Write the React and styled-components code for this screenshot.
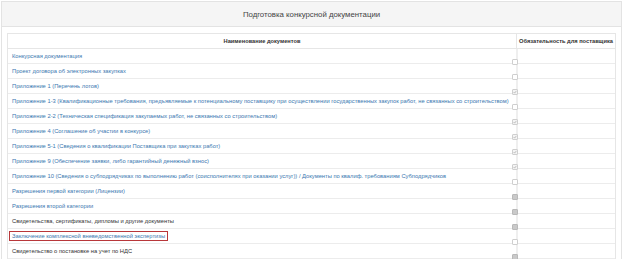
import styled, { createGlobalStyle } from "styled-components";

const GlobalStyle = createGlobalStyle`
  body {
    margin: 0;
    background: #fff;
    font-family: "Liberation Sans", Arial, sans-serif;
    color: #333;
  }
`;

// список документов конкурса
const DOCS = [
  { title: "Конкурсная документация", link: true, box: "empty" },
  { title: "Проект договора об электронных закупках", link: true, box: "empty" },
  { title: "Приложение 1 (Перечень лотов)", link: true, box: "checked" },
  {
    title:
      "Приложение 1-3 (Квалификационные требования, предъявляемые к потенциальному поставщику при осуществлении государственных закупок работ, не связанных со строительством)",
    link: true,
    box: "empty",
  },
  {
    title: "Приложение 2-2 (Техническая спецификация закупаемых работ, не связанных со строительством)",
    link: true,
    box: "checked",
  },
  { title: "Приложение 4 (Соглашение об участии в конкурсе)", link: true, box: "checked" },
  {
    title: "Приложение 5-1 (Сведения о квалификации Поставщика при закупках работ)",
    link: true,
    box: "checked",
  },
  {
    title: "Приложение 9 (Обеспечение заявки, либо гарантийный денежный взнос)",
    link: true,
    box: "checked",
  },
  {
    title:
      "Приложение 10 (Сведения о субподрядчиках по выполнению работ (соисполнителях при оказании услуг)) / Документы по квалиф. требованиям Субподрядчиков",
    link: true,
    box: "empty",
  },
  { title: "Разрешения первой категории (Лицензии)", link: true, box: "filled" },
  { title: "Разрешения второй категории", link: true, box: "filled" },
  { title: "Свидетельства, сертификаты, дипломы и другие документы", link: false, box: "filled" },
  {
    title: "Заключение комплексной вневедомственной экспертизы",
    link: true,
    box: "empty",
    marked: true,
  },
  { title: "Свидетельство о постановке на учет по НДС", link: false, box: "filled" },
];

const App = () => {
  return (
    <>
      <GlobalStyle />
      <Panel>
        <Heading>Подготовка конкурсной документации</Heading>
        <Body>
          <Table>
            <HeadRow>
              <HeadCell>Наименование документов</HeadCell>
              <HeadCell $side>Обязательность для поставщика</HeadCell>
            </HeadRow>
            {DOCS.map((doc) => (
              <Row key={doc.title}>
                <NameCell>
                  <Name $link={doc.link} $marked={doc.marked}>
                    {doc.title}
                  </Name>
                  <Box $state={doc.box}>
                    {doc.box === "checked" && (
                      <svg width="4" height="4" viewBox="0 0 4 4">
                        <path d="M0.6 2.1 L1.6 3.1 L3.4 0.9" fill="none" stroke="#a8a8a8" strokeWidth="0.7" />
                      </svg>
                    )}
                  </Box>
                </NameCell>
                <SideCell />
              </Row>
            ))}
          </Table>
        </Body>
      </Panel>
    </>
  );
};

export default App;

const Panel = styled.div`
  margin: 1px 2px 0 1px;
  border: 1px solid #e3e3e3;
  border-bottom: none;
  background: #fff;
`;

const Heading = styled.div`
  height: 24px;
  background: #f5f5f5;
  border-bottom: 1px solid #e3e3e3;
  display: flex;
  align-items: center;
  justify-content: center;
  font-size: 7.8px;
  color: #444;
`;

const Body = styled.div`
  padding: 6px 5px 0 5px;
`;

const Table = styled.div`
  border: 1px solid #e6e6e6;
  border-bottom: none;
`;

const HeadRow = styled.div`
  display: grid;
  grid-template-columns: 508px 1fr;
  height: 14px;
  border-bottom: 1px solid #e6e6e6;
`;

const Row = styled(HeadRow)`
  border-bottom-color: #ececec;
`;

const HeadCell = styled.div`
  display: flex;
  align-items: center;
  justify-content: center;
  font-size: 5.7px;
  font-weight: bold;
  color: #333;
  white-space: nowrap;
  ${(p) => p.$side && "border-left: 1px solid #e6e6e6;"}
`;

const NameCell = styled.div`
  display: flex;
  align-items: center;
  padding-left: 4px;
`;

const SideCell = styled.div`
  border-left: 2px solid #efefef;
`;

const Name = styled.span`
  font-size: 5.78px;
  white-space: nowrap;
  color: ${(p) => (p.$link ? "#3a77b0" : "#333")};
  ${(p) =>
    p.$marked &&
    `
    border: 1px solid #b8373a;
    padding: 1px 2px;
    margin-left: -3px;
  `}
`;

const Box = styled.span`
  margin-left: auto;
  margin-right: -2px;
  align-self: flex-end;
  margin-bottom: -2px;
  width: 4px;
  height: 4px;
  display: flex;
  align-items: center;
  justify-content: center;
  border: 1px solid ${(p) => (p.$state === "filled" ? "#b9b9b9" : "#cfcfcf")};
  background: ${(p) =>
    p.$state === "filled" ? "#c9c9c9" : p.$state === "checked" ? "#f4f4f4" : "#fff"};
  border-radius: 1px;
  position: relative;
  z-index: 1;
`;
